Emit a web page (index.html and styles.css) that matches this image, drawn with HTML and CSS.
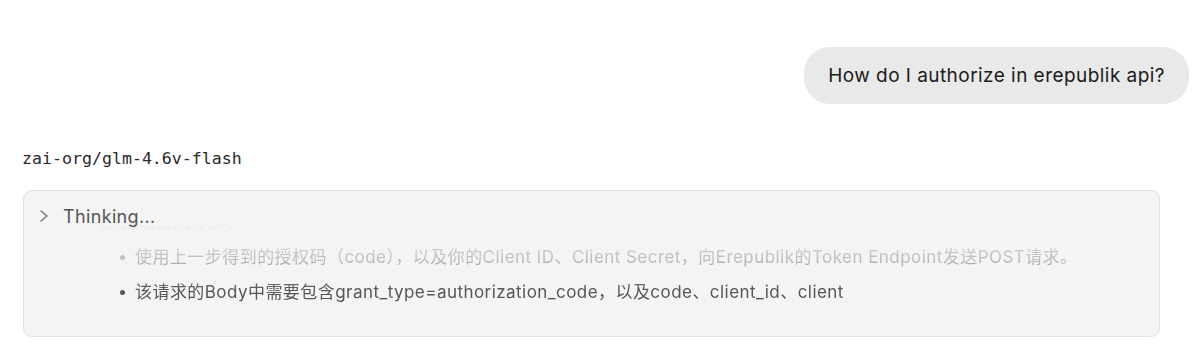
FILE: index.html
```html
<!DOCTYPE html>
<html lang="zh">
<head>
<meta charset="utf-8">
<link rel="stylesheet" href="styles.css">
</head>
<body>
<div class="chat">
  <div class="user-row">
    <div class="bubble">How do I authorize in erepublik api?</div>
  </div>
  <div class="model">zai-org/glm-4.6v-flash</div>
  <div class="thinking">
    <div class="think-head">
      <svg class="chev" width="12" height="14" viewBox="0 0 12 14"><path d="M3 2l6 5-6 5" fill="none" stroke="#777" stroke-width="1.4" stroke-linecap="round" stroke-linejoin="round"/></svg>
      <span class="think-title">Thinking...</span>
    </div>
    <div class="think-window">
      <div class="think-content">
        <p class="step">2. 换取访问令牌：</p>
        <ul class="items">
          <li>使用上一步得到的授权码（code），以及你的Client ID、Client Secret，向Erepublik的Token Endpoint发送POST请求。</li>
          <li>该请求的Body中需要包含grant_type=authorization_code，以及code、client_id、client</li>
        </ul>
      </div>
    </div>
  </div>
</div>
</body>
</html>
```

FILE: styles.css
```css
* { box-sizing: border-box; }
html, body { margin: 0; padding: 0; background: #fff; }
body {
  font-family: Inter, "Liberation Sans", Arial, "Noto Sans CJK SC", sans-serif;
  color: #1f1f1f;
}
.chat {
  padding: 47px 11px 0 23px;
}
.user-row {
  display: flex;
  justify-content: flex-end;
}
.bubble {
  background: #e9e9e9;
  border-radius: 26px;
  padding: 0 24px;
  height: 57px;
  display: flex;
  align-items: center;
  font-size: 19px;
  letter-spacing: 0.45px;
  color: #1a1a1a;
}
.model {
  margin-top: 45px;
  margin-left: -1px;
  font-family: "DejaVu Sans Mono", "Liberation Mono", monospace;
  font-size: 16.6px;
  color: #2a2a2a;
  line-height: 20px;
}
.thinking {
  margin-top: 21px;
  width: 1137px;
  height: 147px;
  background: #f4f4f4;
  border: 1px solid #e1e1e1;
  border-radius: 9px;
  padding: 0;
  overflow: hidden;
}
.think-head {
  display: flex;
  align-items: center;
  height: 34px;
  margin-top: 8px;
  padding-left: 14px;
}
.chev { margin-right: 13px; }
.think-title {
  font-size: 18px;
  letter-spacing: 0.35px;
  color: #555;
}
.think-window {
  margin-top: -8px;
  height: 85px;
  overflow: hidden;
  display: flex;
  flex-direction: column;
  justify-content: flex-end;
  -webkit-mask-image: linear-gradient(to bottom, rgba(0,0,0,0.03) 0, rgba(0,0,0,0.08) 6px, rgba(0,0,0,0.35) 35px, #000 65px);
  mask-image: linear-gradient(to bottom, rgba(0,0,0,0.03) 0, rgba(0,0,0,0.08) 6px, rgba(0,0,0,0.35) 35px, #000 65px);
}
.think-content {
  font-size: 17px;
  letter-spacing: 0.45px;
  color: #555;
}
.step {
  margin: 0;
  padding-left: 76px;
  line-height: 35px;
}
.items {
  margin: 0;
  padding: 0 0 0 111px;
  list-style: none;
}
.items li {
  line-height: 35px;
  position: relative;
  white-space: nowrap;
}
.items li::before {
  content: "";
  position: absolute;
  left: -15px;
  top: 15px;
  width: 5px;
  height: 5px;
  border-radius: 50%;
  background: currentColor;
}
```
